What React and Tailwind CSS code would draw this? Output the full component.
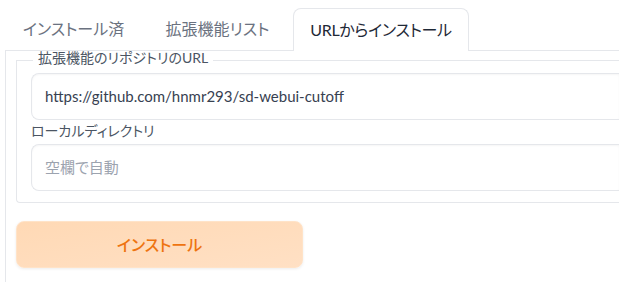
import React from "react";

export default function App() {
  const font = "font-['Lato','Noto_Sans_CJK_JP',sans-serif] [font-feature-settings:'palt']";
  return (
    <div className={`w-[619px] h-[282px] bg-white overflow-hidden ${font}`}>
      <div className="flex items-end pl-[5px] pt-[8px]">
        <button className="w-[137px] h-[42px] text-[16px] text-[#6b7280] leading-none">インストール済</button>
        <button className="w-[151px] h-[42px] text-[16px] text-[#6b7280] leading-none">拡張機能リスト</button>
        <button className="relative z-10 -mb-px w-[176px] h-[43px] text-[16px] tracking-[-0.3px] text-[#1f2937] leading-none bg-white border border-b-0 border-[#e5e7eb] rounded-t-lg">
          URLからインストール
        </button>
      </div>
      <div className="ml-[5px] h-[240px] border-l border-t border-[#e5e7eb] pl-[10px]">
        <fieldset className="border border-r-0 border-[#e5e7eb] rounded-bl-sm pl-[14px] pb-[11px]">
          <legend className="ml-[2px] px-[5px] pb-[4px] text-[14px] leading-[14px] text-[#4b5563]">拡張機能のリポジトリのURL</legend>
          <div className="mt-[4px] h-[47px] border border-r-0 border-[#e5e7eb] rounded-l-lg shadow-[inset_0_1px_2px_rgba(0,0,0,0.04)] flex items-center pl-[13px] text-[15px] text-[#374151]">
            https://github.com/hnmr293/sd-webui-cutoff
          </div>
          <div className="h-[24px] flex items-center pb-[3px] text-[14px] text-[#4b5563]">ローカルディレクトリ</div>
          <div className="h-[47px] border border-r-0 border-[#e5e7eb] rounded-l-lg shadow-[inset_0_1px_2px_rgba(0,0,0,0.04)] flex items-center pl-[13px] text-[15px] text-[#9ca3af]">
            空欄で自動
          </div>
        </fieldset>
        <button className="mt-[18px] w-[287px] h-[47px] rounded-lg bg-gradient-to-br from-[#ffd9b5] to-[#ffe0c4] border border-[#ffe3c8] shadow-[0_1px_3px_rgba(0,0,0,0.08)] text-[#ee7410] text-[16px] font-medium">
          インストール
        </button>
      </div>
    </div>
  );
}
